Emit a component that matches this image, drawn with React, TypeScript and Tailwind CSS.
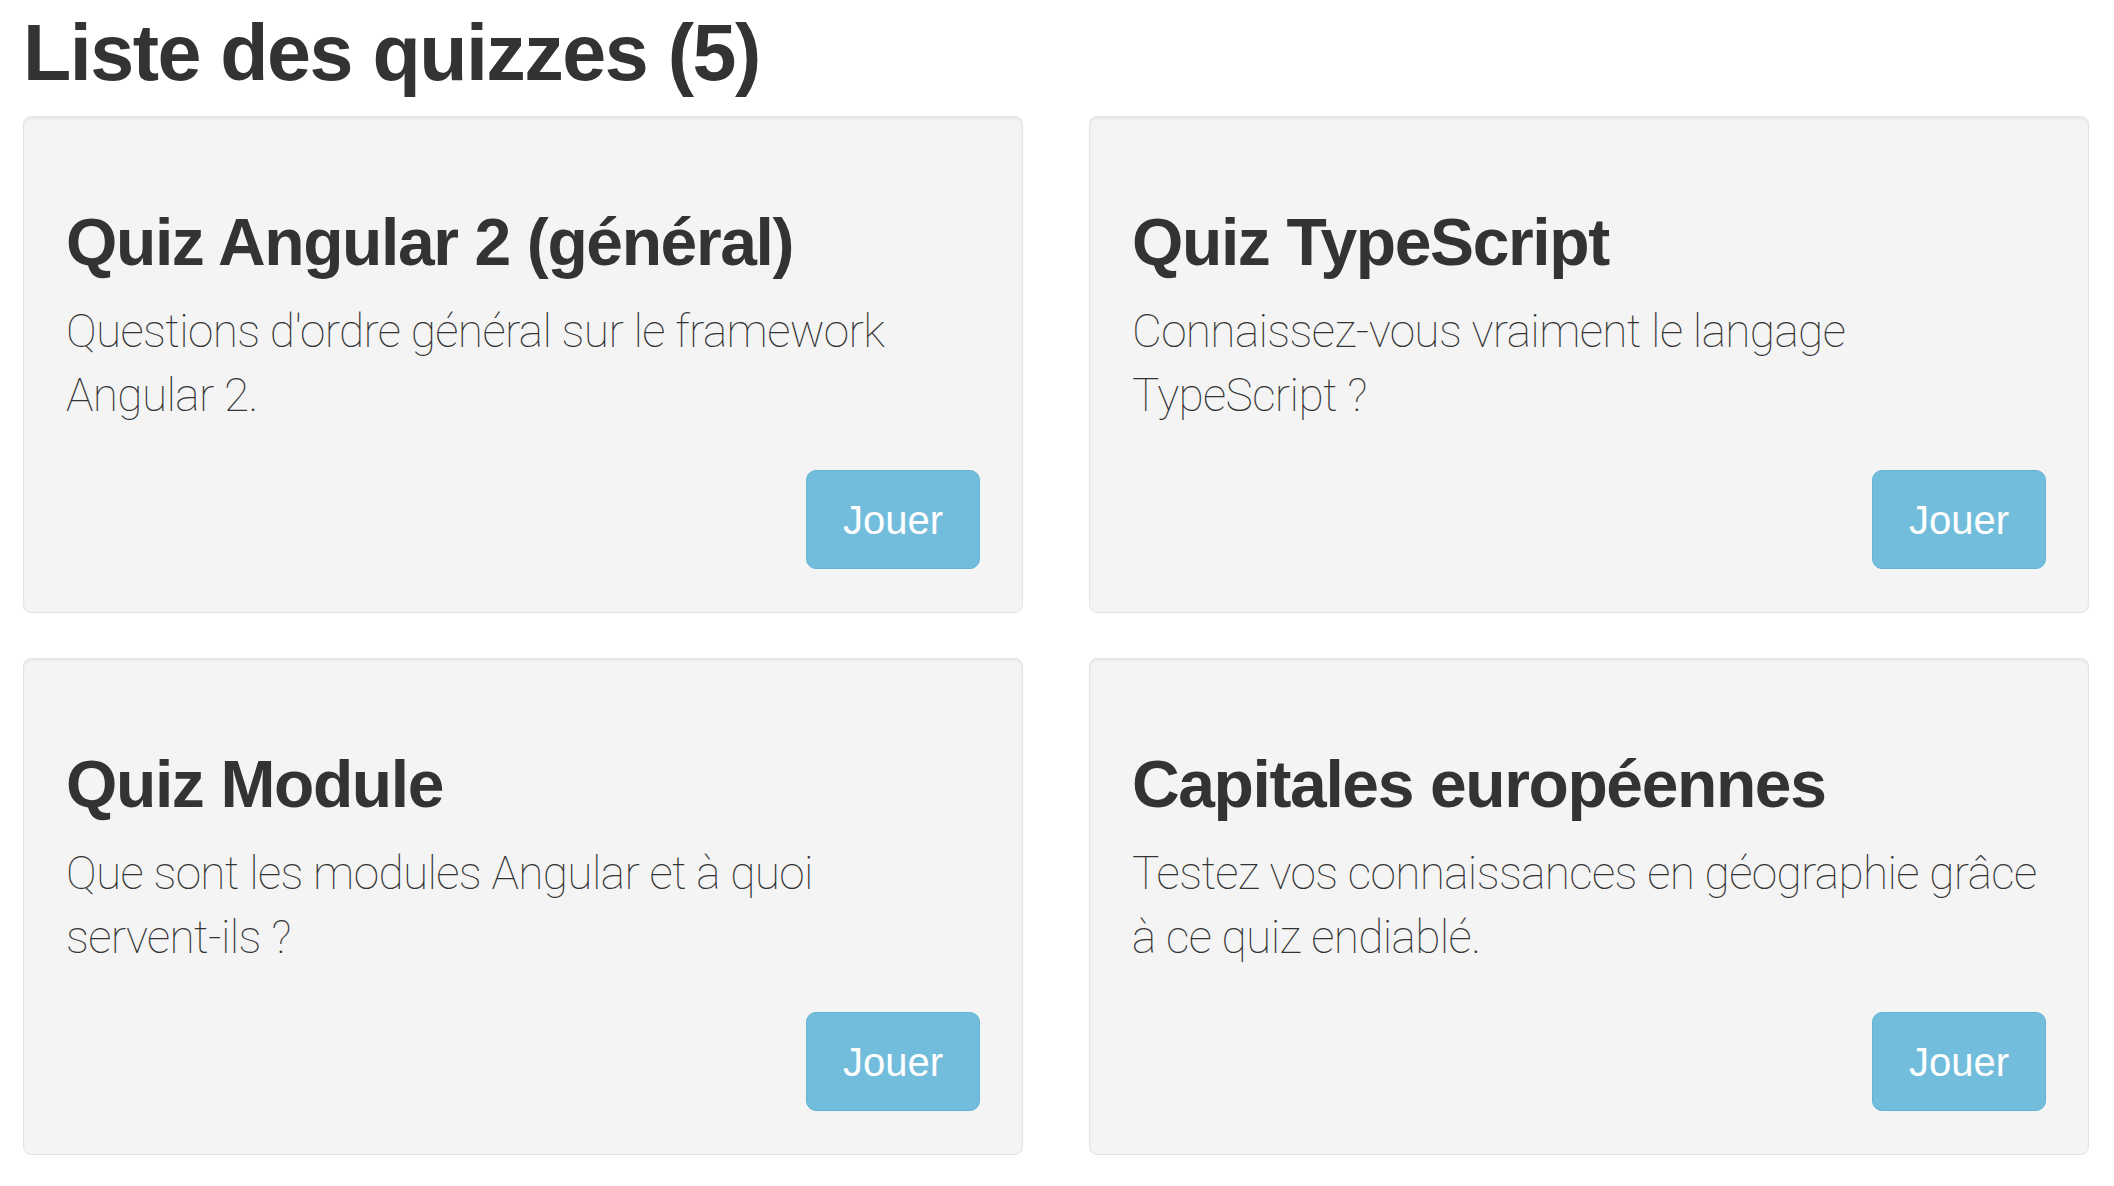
import React from "react";

type Quiz = { title: string; description: React.ReactNode };

const quizzes: Quiz[] = [
  {
    title: "Quiz Angular 2 (général)",
    description: <>Questions d'ordre général sur le framework Angular 2.</>,
  },
  {
    title: "Quiz TypeScript",
    description: (
      <>
        <span className="whitespace-nowrap">Connaissez-vous</span> vraiment le langage{" "}
        <span className="whitespace-nowrap">TypeScript ?</span>
      </>
    ),
  },
  {
    title: "Quiz Module",
    description: (
      <>
        Que sont les modules Angular et à quoi <span className="whitespace-nowrap">servent-ils ?</span>
      </>
    ),
  },
  {
    title: "Capitales européennes",
    description: <>Testez vos connaissances en géographie grâce à ce quiz endiablé.</>,
  },
];

function QuizCard({ quiz }: { quiz: Quiz }) {
  return (
    <div className="flex flex-col rounded-[8px] border border-[#e3e3e3] bg-[#f4f4f4] px-[42px] pt-[89px] pb-[43px] shadow-[inset_0_2px_2px_rgba(0,0,0,0.05)]">
      <h2 className="font-['Liberation_Sans',Arial,sans-serif] text-[66px] font-bold leading-[73px] tracking-[-0.021em] text-[#333333]">
        {quiz.title}
      </h2>
      <p className="mt-[20px] h-[128px] font-['Roboto',sans-serif] text-[46px] font-[250] leading-[64px] tracking-[-0.014em] text-[#333333]">
        {quiz.description}
      </p>
      <div className="mt-[43px] flex justify-end">
        <button className="h-[99px] w-[174px] rounded-[10px] border border-[#62b3d6] bg-[#72bddb] font-['Liberation_Sans',Arial,sans-serif] text-[40px] text-white">
          Jouer
        </button>
      </div>
    </div>
  );
}

export default function App() {
  return (
    <div className="min-h-screen bg-white pl-[23px] pr-[25px] font-['Liberation_Sans',Arial,sans-serif]">
      <h1 className="pt-[9px] text-[79px] font-bold leading-[87px] tracking-[-0.019em] text-[#333333]">
        Liste des quizzes (5)
      </h1>
      <div className="mt-[20px] grid grid-cols-2 gap-x-[66px] gap-y-[45px]">
        {quizzes.map((q) => (
          <QuizCard key={q.title} quiz={q} />
        ))}
      </div>
    </div>
  );
}
